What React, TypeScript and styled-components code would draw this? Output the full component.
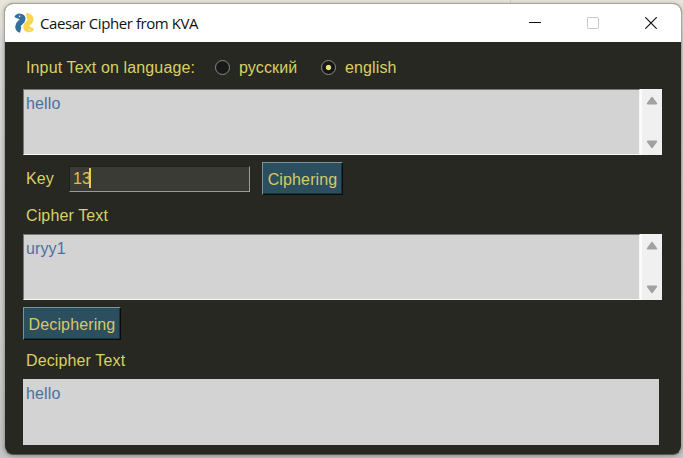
import React from 'react';
import styled, { createGlobalStyle } from 'styled-components';

const GlobalStyle = createGlobalStyle`
  * { box-sizing: border-box; }
  html, body { margin: 0; height: 100%; overflow: hidden; }
  body { background: linear-gradient(to bottom, #e8e6da 0, #e8e6da 22px, #dcdcdc 42px, #d2d2d2 300px, #c6c6c6 458px); }
`;

const Desktop = styled.div`
  width: 683px;
  height: 458px;
  padding: 3px 1px 0 4px;
  background: linear-gradient(#cfcdc4, #cfcdc4) 510px 0 / 1px 4px no-repeat;
`;

const Window = styled.main`
  width: 678px;
  height: 452px;
  border: 1px solid #a5a59f;
  border-bottom-color: #55554f;
  border-radius: 9px;
  overflow: hidden;
  background: #272822;
  box-shadow: 0 1px 5px rgba(0, 0, 0, 0.3);
`;

const TitleBar = styled.header`
  height: 38px;
  display: flex;
  align-items: center;
  padding: 0 24px 1px 9px;
  background: #fff;
  color: #111;
`;

const Title = styled.h1`
  flex: 1;
  margin: 0 0 0 5px;
  font: 400 15px/20px 'Open Sans', 'Noto Sans', sans-serif;
  letter-spacing: -0.42px;
  white-space: nowrap;
`;

const Controls = styled.div`
  display: flex;
  gap: 46px;
`;

const Glyph = styled.svg`
  display: block;
  flex: none;
`;

const Body = styled.form`
  height: 412px;
  padding: 0 18px;
  font: 16px/20px 'Liberation Sans', Arial, sans-serif;
  letter-spacing: 0.13px;
  color: #d9d066;
`;

const Row = styled.div<{ $height: number; $left?: number; $top?: number; $bottom?: number }>`
  display: flex;
  align-items: center;
  height: ${(p) => p.$height}px;
  padding: ${(p) => p.$top ?? 0}px 0 ${(p) => p.$bottom ?? 0}px ${(p) => p.$left ?? 0}px;
`;

const Caption = styled.span<{ $width: number }>`
  flex: none;
  width: ${(p) => p.$width}px;
  padding-top: 1px;
  white-space: nowrap;
`;

const Radio = styled.span<{ $checked?: boolean }>`
  flex: none;
  width: 15px;
  height: 15px;
  margin-right: 9px;
  border: 1px solid #8b8b87;
  border-radius: 50%;
  background: ${(p) => (p.$checked ? 'radial-gradient(circle, #e8df84 0 2.2px, #151714 3.1px)' : '#171a18')};
`;

const Field = styled.div<{ $width: number }>`
  display: flex;
  width: ${(p) => p.$width}px;
  height: 66px;
  background: #d3d3d3;
  color: #4a70a0;
`;

const TextArea = styled.div<{ $flat?: boolean }>`
  flex: 1;
  padding: ${(p) => (p.$flat ? '5px 3px' : '4px 2px')};
  border: ${(p) => (p.$flat ? 0 : 1)}px solid;
  border-color: #777773 #f6f6f6 #f6f6f6 #777773;
`;

const ScrollBar = styled.div`
  display: flex;
  flex-direction: column;
  justify-content: space-between;
  align-items: center;
  width: 22px;
  padding: 7px 1px 6px 0;
  border-left: 2px solid #fbfbfb;
  background: #f0f0f0;
`;

const KeyInput = styled.div`
  display: flex;
  align-items: center;
  width: 181px;
  height: 26px;
  margin-right: 12px;
  padding: 1px 0 0 3px;
  border: 1px solid;
  border-color: #20211c #9c9c96 #9c9c96 #20211c;
  background: #3b3b35;
  color: #e0bd50;
`;

const Caret = styled.span`
  width: 2px;
  height: 20px;
  margin: -2px 0 0 -2px;
  background: #f0cb50;
`;

const Button = styled.button<{ $width: number }>`
  flex: none;
  width: ${(p) => p.$width}px;
  height: 33px;
  padding: 2px 0 0;
  border: 1px solid;
  border-color: #7593a0 #080b0c #080b0c #7593a0;
  box-shadow: inset -1px -1px #19343f;
  border-radius: 0;
  background: #2b4f5f;
  color: #dac766;
  font: inherit;
  letter-spacing: inherit;
  white-space: nowrap;
`;

function Arrow({ down = false }: { down?: boolean }) {
  return (
    <Glyph width="12" height="9" viewBox="0 0 12 9">
      <path
        d={down ? 'M1.8 1.5h8.4L6 7.2z' : 'M1.8 7.5h8.4L6 1.8z'}
        fill="#a1a1a1"
        stroke="#a1a1a1"
        strokeWidth="2"
        strokeLinejoin="round"
      />
    </Glyph>
  );
}

function ScrollField({ text }: { text: string }) {
  return (
    <Field $width={639}>
      <TextArea>{text}</TextArea>
      <ScrollBar>
        <Arrow />
        <Arrow down />
      </ScrollBar>
    </Field>
  );
}

function SnakeLogo() {
  return (
    <Glyph width="21" height="20" viewBox="0 0 21 20">
      <g fill="none" strokeWidth="5.6" strokeLinejoin="round">
        <path d="M3 5.3C4 2.5 8.6 2.9 8.7 5.9C8.8 9.2 4 9.8 4 13.5C4 15.3 5 16.6 6.7 17" stroke="#34709f" />
        <path d="M12.4 3.3C15.3 2.7 17 4.4 16.6 7C16.2 9.7 12 10.6 12 13.8C12 17 16.3 17.2 17.7 14.6" stroke="#fbd64f" />
      </g>
      <circle cx="5.6" cy="3.3" r=".7" fill="#fff" />
      <circle cx="15.4" cy="16.8" r=".7" fill="#fff" />
    </Glyph>
  );
}

export default function App() {
  return (
    <>
      <GlobalStyle />
      <Desktop>
        <Window>
          <TitleBar>
            <SnakeLogo />
            <Title>Caesar Cipher from KVA</Title>
            <Controls>
              <Glyph width="12" height="12" viewBox="0 0 12 12">
                <path d="M0 5.5h12" stroke="#111" />
              </Glyph>
              <Glyph width="12" height="12" viewBox="0 0 12 12">
                <rect x=".5" y=".5" width="11" height="11" rx=".8" fill="none" stroke="#c6c6c6" />
              </Glyph>
              <Glyph width="12" height="12" viewBox="0 0 12 12">
                <path d="M.3.3l11.4 11.4M11.7.3L.3 11.7" stroke="#111" strokeWidth="1.2" />
              </Glyph>
            </Controls>
          </TitleBar>
          <Body>
            <Row $height={47} $left={3} $top={4}>
              <Caption $width={189}>Input Text on language:</Caption>
              <Radio />
              <Caption $width={82}>русский</Caption>
              <Radio $checked />
              <Caption $width={60}>english</Caption>
            </Row>
            <ScrollField text="hello" />
            <Row $height={47} $left={3}>
              <Caption $width={43}>Key</Caption>
              <KeyInput>
                13
                <Caret />
              </KeyInput>
              <Button type="button" $width={81}>Ciphering</Button>
            </Row>
            <Row $height={32} $left={3} $bottom={5}>
              <Caption $width={90}>Cipher Text</Caption>
            </Row>
            <ScrollField text="uryy1" />
            <Row $height={47}>
              <Button type="button" $width={98}>Deciphering</Button>
            </Row>
            <Row $height={32} $left={3} $bottom={5}>
              <Caption $width={110}>Decipher Text</Caption>
            </Row>
            <Field $width={636}>
              <TextArea $flat>hello</TextArea>
            </Field>
          </Body>
        </Window>
      </Desktop>
    </>
  );
}
